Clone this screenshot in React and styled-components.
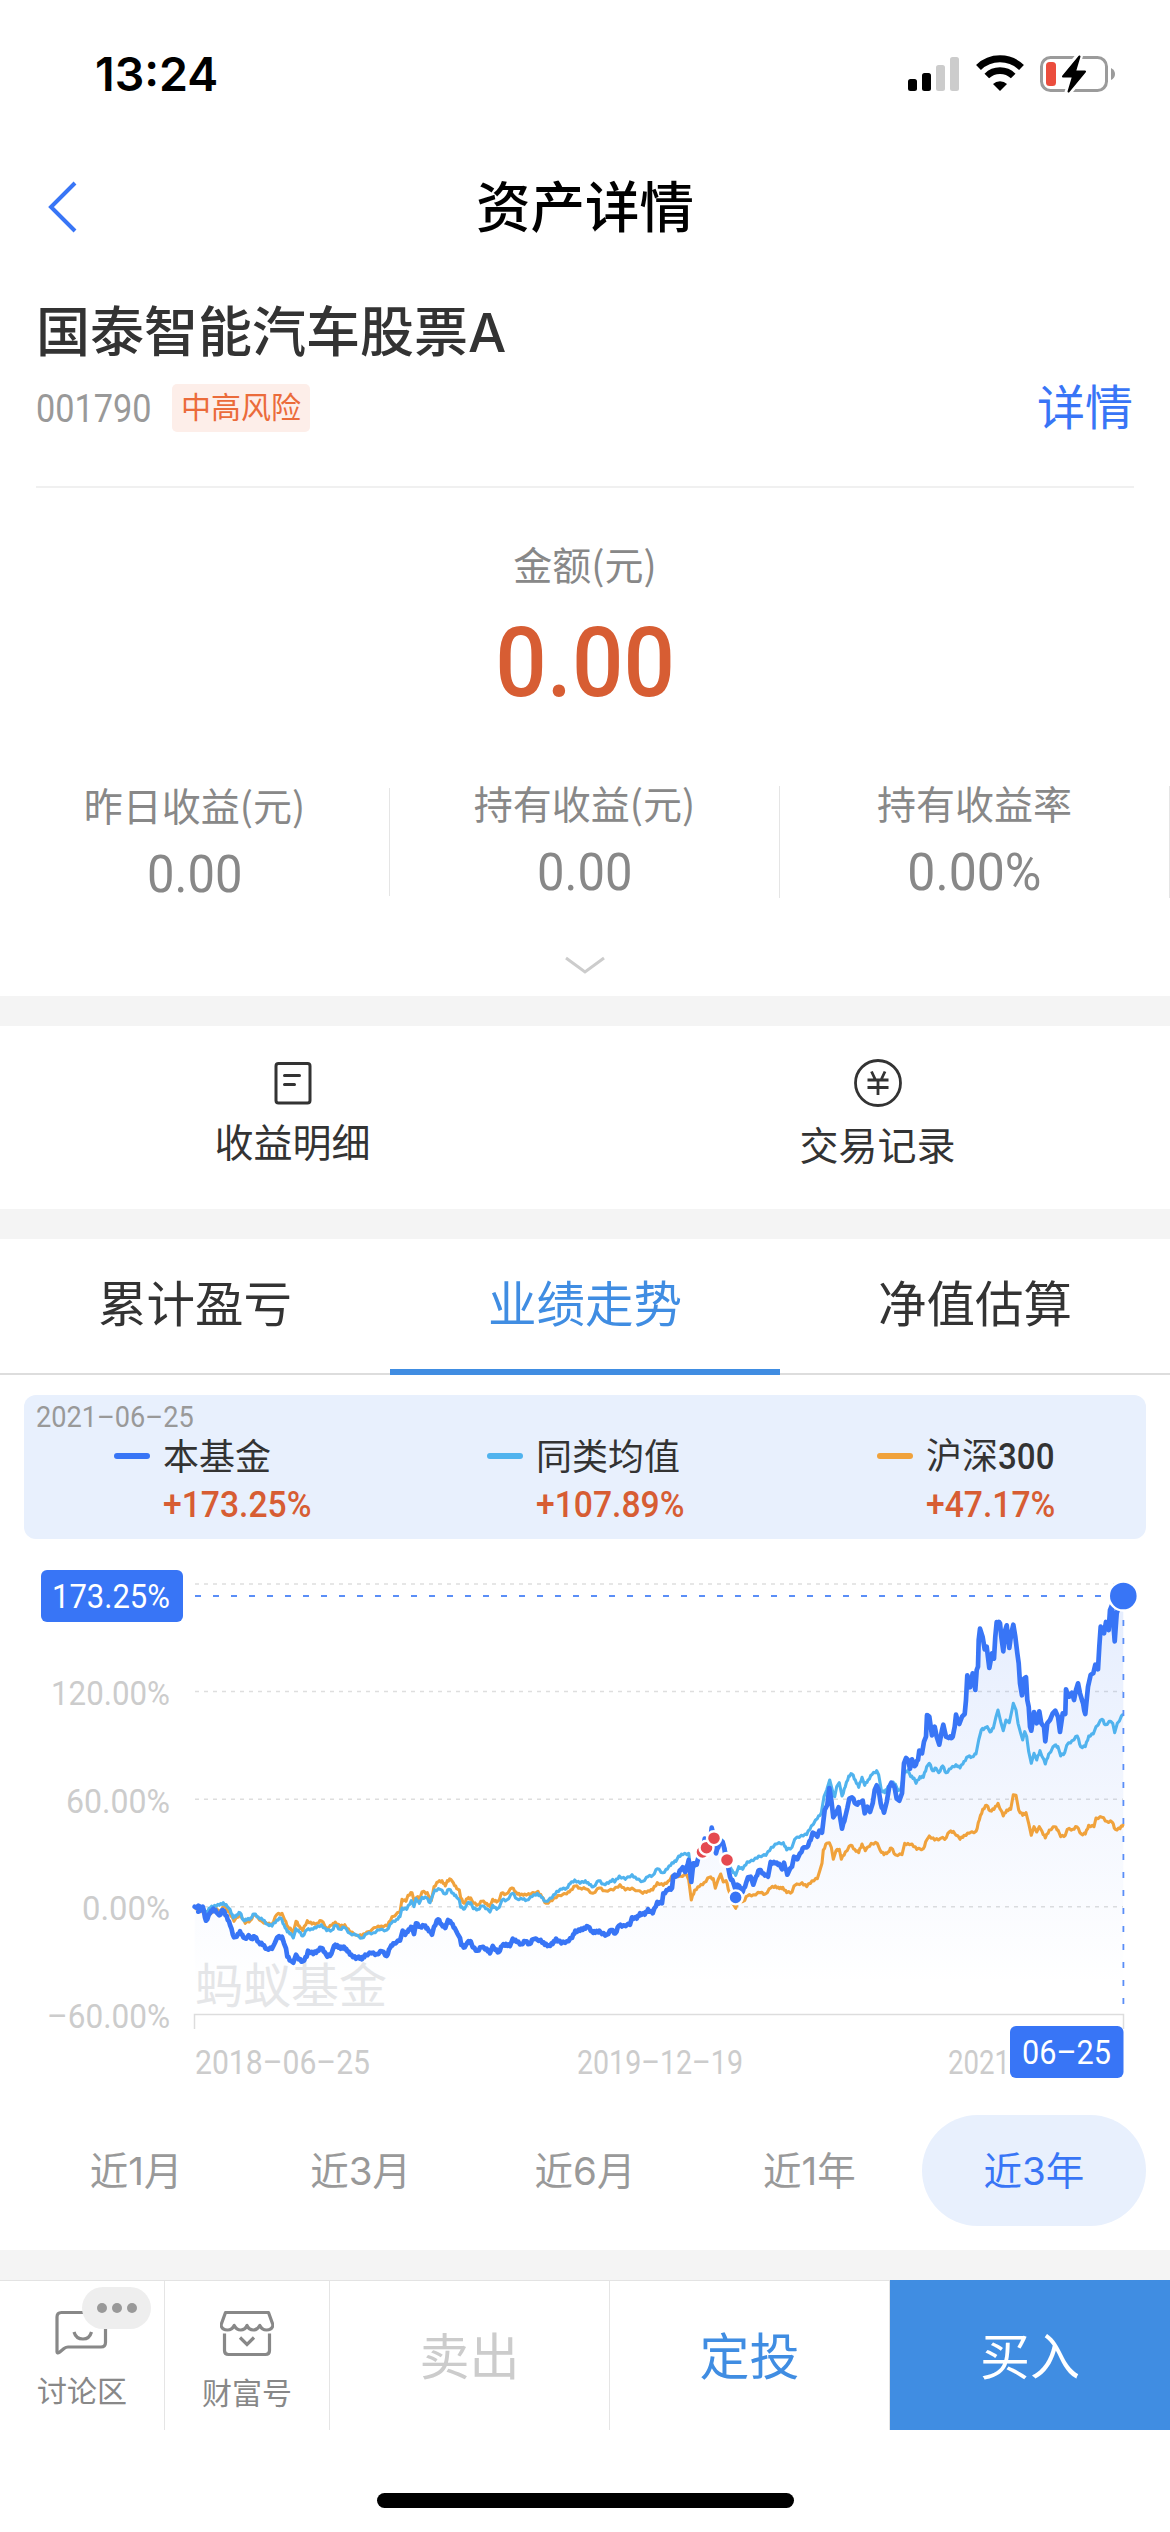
import styled, { createGlobalStyle } from "styled-components";

const CJK = `"Noto Sans CJK SC", sans-serif`;
const MIXED = `Inter, "Noto Sans CJK SC", sans-serif`;
const DIGITS = `Roboto, "Noto Sans CJK SC", sans-serif`;

const GlobalStyle = createGlobalStyle`
  * {
    box-sizing: border-box;
  }
  body {
    margin: 0;
    background: #fff;
    font-family: ${CJK};
  }
`;

const Page = styled.main`
  width: 1170px;
  height: 2532px;
  display: flex;
  flex-direction: column;
  background: #fff;
  color: #333;
  overflow: hidden;
  white-space: nowrap;
`;

/* narrow digits, $stretch squeezes the glyphs */
const Num = styled.span`
  display: inline-block;
  font-family: ${DIGITS};
  font-size: ${(props) => props.$size}px;
  font-weight: ${(props) => props.$weight || 450};
  line-height: 1;
  transform: scaleX(${(props) => props.$stretch || 0.9});
  transform-origin: ${(props) => props.$origin || "center"};
`;

/* ---------- status bar ---------- */

const StatusBarStyle = styled.div`
  height: 148px;
  padding: 0 54px 0 95px;
  display: flex;
  justify-content: space-between;
`;

const Clock = styled.span`
  font-family: Inter, sans-serif;
  font-weight: 600;
  font-size: 46.5px;
  line-height: 56px;
  padding-top: 46px;
  color: #000;
`;

const StatusIcons = styled.div`
  display: flex;
  gap: 16px;
  padding-top: 54px;
  height: 94px;
`;

const StatusBar = () => (
  <StatusBarStyle>
    <Clock>13:24</Clock>
    <StatusIcons>
      <svg width="52" height="40" viewBox="0 0 52 40">
        <rect x="0" y="25" width="9" height="12" rx="2.5" fill="#000" />
        <rect x="14" y="19" width="9" height="18" rx="2.5" fill="#000" />
        <rect x="28" y="11" width="9" height="26" rx="2.5" fill="#ccc" />
        <rect x="42" y="3" width="9" height="34" rx="2.5" fill="#ccc" />
      </svg>
      <svg width="48" height="40" viewBox="0 0 48 40">
        <path d="M2.5 13.5 A31 31 0 0 1 45.5 13.5" fill="none" stroke="#000" strokeWidth="7" />
        <path d="M10.8 22 A19 19 0 0 1 37.2 22" fill="none" stroke="#000" strokeWidth="6.6" />
        <path d="M24 37 L17 30 A10 10 0 0 1 31 30 Z" fill="#000" />
      </svg>
      <svg width="76" height="40" viewBox="0 0 76 40">
        <rect x="1.5" y="3.5" width="65" height="33" rx="9" fill="none" stroke="#9b9b9b" strokeWidth="3" />
        <path d="M71 14 Q75 16 75 20 Q75 24 71 26 Z" fill="#9b9b9b" />
        <rect x="6" y="8" width="10" height="24" rx="3.5" fill="#eb4d3d" />
        <path
          d="M39.5 1.5 L22 23 H32.5 L28 38.5 L46 17 H35.5 Z"
          fill="#000"
          stroke="#fff"
          strokeWidth="7"
          strokeLinejoin="round"
          paintOrder="stroke"
        />
        <path d="M39.5 2.5 L23 22.5 H33 L28.5 37.5 L45 17.5 H35 Z" fill="#000" stroke="#000" strokeWidth="2" strokeLinejoin="round" />
      </svg>
    </StatusIcons>
  </StatusBarStyle>
);

/* ---------- nav bar ---------- */

const NavBar = styled.header`
  height: 118px;
  display: grid;
  grid-template-columns: 120px 1fr 120px;
  align-items: center;
`;

const BackIcon = styled.svg`
  margin-left: 45px;
`;

const NavTitle = styled.h1`
  margin: 0;
  color: #000;
  font-size: 54.5px;
  line-height: 60px;
  font-weight: 500;
  text-align: center;
  padding-bottom: 6px;
`;

/* ---------- fund header ---------- */

const FundHeader = styled.section`
  margin: 33px 36px 0;
  height: 189px;
  border-bottom: 2px solid #f0f0f0;
`;

const FundName = styled.h2`
  margin: 0;
  font-family: ${MIXED};
  font-size: 54px;
  line-height: 68px;
  font-weight: 500;
`;

const FundMeta = styled.div`
  display: flex;
  align-items: center;
  height: 60px;
  margin-top: 11px;
  color: #999;
`;

const FundCode = styled.span`
  display: flex;
  width: 136px;
  padding-top: 3px;
`;

const RiskTag = styled.span`
  height: 48px;
  padding: 0 9px;
  border-radius: 5px;
  background: #fdeee9;
  color: #eb6b3a;
  font-size: 30px;
  line-height: 43px;
`;

const DetailLink = styled.a`
  margin-left: auto;
  margin-right: 1px;
  color: #3875f6;
  font-size: 48px;
  line-height: 56px;
  padding-bottom: 8px;
`;

/* ---------- amounts ---------- */

const Amount = styled.section`
  height: 298px;
  padding-top: 53px;
  display: flex;
  flex-direction: column;
  align-items: center;
  color: #888;
`;

const Label = styled.span`
  font-size: 39px;
  line-height: ${(props) => props.$line || 44}px;
  color: ${(props) => props.$color || "#888"};
`;

const BigNum = styled(Num)`
  margin-top: 30px;
  color: #d75d33;
`;

const Stats = styled.section`
  height: 210px;
  display: grid;
  grid-template-columns: repeat(3, 1fr);
  align-content: start;
`;

const Stat = styled.div`
  height: ${(props) => (props.$low ? 108 : 112)}px;
  margin-top: ${(props) => (props.$low ? 2 : 0)}px;
  border-right: 1px solid #e5e5e5;
  display: flex;
  flex-direction: column;
  align-items: center;
  gap: 29px;
  color: #888;
`;

const ChevronRow = styled.div`
  grid-column: 1 / -1;
  display: flex;
  justify-content: center;
  align-items: center;
  height: 30px;
  margin-top: 53px;
`;

const Gap = styled.div`
  height: 30px;
  flex: none;
  background: #f4f4f4;
`;

/* ---------- shortcuts ---------- */

const Shortcuts = styled.nav`
  height: 183px;
  display: grid;
  grid-template-columns: 1fr 1fr;
`;

const Shortcut = styled.a`
  display: flex;
  flex-direction: column;
  align-items: center;
  padding-top: 32px;
  gap: ${(props) => props.$gap}px;
`;

/* ---------- tabs ---------- */

const Tabs = styled.nav`
  height: 136px;
  display: grid;
  grid-template-columns: repeat(3, 1fr);
  box-shadow: inset 0 -2px 0 #ddd;
`;

const Tab = styled.a`
  font-size: 48.5px;
  line-height: 124px;
  text-align: center;
  color: ${(props) => (props.$active ? "#408de2" : "#333")};
  border-bottom: 6px solid ${(props) => (props.$active ? "#408de2" : "transparent")};
`;

/* ---------- legend ---------- */

const LegendCard = styled.section`
  margin: 20px 24px 0;
  height: 144px;
  padding: 7px 12px 0;
  border-radius: 12px;
  background: #e8f0fd;
`;

const LegendDate = styled.div`
  height: 31px;
  color: #999;
`;

const LegendRow = styled.div`
  display: grid;
  grid-template-columns: 373px 390px 1fr;
  padding-left: 78px;
`;

const LegendItem = styled.div`
  display: grid;
  grid-template-columns: 36px auto;
  column-gap: 13px;
  justify-content: start;
  align-items: center;
`;

const Dash = styled.i`
  height: 6px;
  border-radius: 3px;
  background: ${(props) => props.$color};
`;

const LegendName = styled.span`
  font-size: 36px;
  line-height: 40px;
  padding-bottom: 4px;
`;

const LegendValue = styled.span`
  grid-column: 2;
  height: 48px;
  padding-top: 8px;
  color: #d75d33;
`;

const legend = [
  { name: "本基金", value: "+173.25%", color: "#3875f6" },
  { name: "同类均值", value: "+107.89%", color: "#50b3ee" },
  { name: "沪深", digits: "300", value: "+47.17%", color: "#f0a23c" },
];

/* ---------- chart ---------- */

// x y pairs in thirds of a pixel, the second part starts 1440 units to the right
const fundA =
  "44,1040 60,1040 55,1055 68,1040 78,1082 90,1060 100,1046 110,1058 118,1066 128,1050 140,1068 150,1095 162,1132 170,1130 180,1114 190,1132 198,1136 206,1126 214,1136 224,1130 236,1146 248,1155 260,1166 276,1166 284,1150 292,1132 306,1130 312,1150 318,1165 322,1190 332,1202 340,1208 348,1184 356,1198 368,1204 380,1190 384,1172 400,1182 412,1172 424,1164 434,1176 442,1190 454,1182 462,1158 472,1156 482,1166 492,1160 502,1174 514,1184 528,1196 536,1190 546,1198 556,1184 574,1180 590,1182 606,1174 620,1188 630,1164 640,1150 660,1142 668,1112 676,1124 686,1108 696,1102 702,1122 708,1090 720,1100 732,1098 742,1104 756,1124 762,1100 774,1078 784,1092 796,1104 804,1080 814,1090 824,1104 832,1120 840,1134 844,1155 854,1162 862,1148 872,1144 878,1162 892,1172 904,1162 920,1166 930,1180 938,1158 946,1170 956,1176 966,1158 978,1152 990,1158 998,1136 1010,1146 1024,1152 1036,1144 1048,1152 1060,1138 1082,1140 1094,1154 1106,1156 1118,1152 1128,1136 1144,1150 1160,1144 1176,1134 1186,1112 1200,1112 1212,1104 1224,1100 1236,1114 1246,1118 1258,1112 1266,1122 1280,1124 1294,1110 1306,1120 1316,1098 1330,1096 1350,1094 1356,1072 1370,1076 1380,1060 1394,1064 1404,1048 1418,1060 1432,1026 1446,1030 1450,1000 1464,990 1476,984";
const fundB =
  "40,948 52,946 62,930 68,922 76,936 86,900 94,966 100,910 110,914 118,880 130,868 134,836 142,865 150,850 155,803 162,834 168,880 178,850 188,846 200,900 206,930 210,950 220,968 227,990 232,974 238,978 248,996 258,970 264,952 272,950 280,974 288,950 298,930 310,940 324,950 332,906 346,910 358,912 366,928 372,908 382,944 390,926 396,920 402,890 412,898 420,880 432,862 440,862 452,840 458,818 466,822 472,830 478,812 486,818 494,750 502,735 508,684 514,720 520,772 528,760 536,742 540,770 546,806 556,770 562,745 568,716 576,712 588,732 600,728 608,722 614,760 622,740 630,756 638,730 644,690 650,676 656,690 662,730 672,758 680,726 688,680 694,668 704,684 710,716 718,722 726,700 732,610 738,594 744,600 750,626 756,598 764,618 774,600 778,572 786,580 792,545 798,530 801,465 808,470 816,526 824,500 830,530 838,554 846,510 850,494 858,530 866,534 878,530 884,500 888,464 898,492 906,470 914,462 918,420 922,346 930,382 938,340 946,390 950,330 954,320 956,240 960,206 968,232 974,268 980,260 988,324 996,280 1002,296 1006,230 1010,186 1020,190 1024,230 1030,274 1036,210 1040,196 1048,264 1054,220 1060,194 1066,230 1072,280 1076,310 1080,370 1086,406 1092,356 1098,352 1102,420 1106,440 1110,500 1114,512 1122,456 1130,490 1138,454 1144,490 1152,500 1156,544 1162,490 1170,480 1178,460 1186,452 1194,470 1200,516 1208,460 1216,462 1218,388 1228,410 1236,398 1242,420 1248,390 1254,370 1260,400 1266,420 1276,462 1284,380 1292,344 1300,340 1306,314 1314,328 1318,260 1322,200 1332,220 1338,186 1346,210 1350,150 1356,135 1364,244 1370,160 1380,120 1390,108";
const peersA =
  "44,1040 64,1040 80,1056 90,1044 104,1036 118,1036 130,1028 142,1040 150,1048 160,1074 170,1064 180,1058 190,1080 200,1080 212,1074 222,1062 234,1070 248,1080 262,1092 276,1098 290,1080 302,1074 312,1094 322,1116 332,1120 340,1134 348,1106 358,1116 368,1128 380,1110 394,1106 408,1104 424,1094 440,1112 456,1110 466,1096 480,1108 492,1102 510,1120 528,1126 546,1134 560,1122 580,1118 598,1110 620,1110 634,1090 650,1078 660,1070 666,1044 680,1048 694,1022 702,1040 708,1016 718,1030 726,1012 740,1014 750,1028 758,1006 764,990 780,988 796,1002 806,988 820,1000 830,1012 838,1020 842,1042 854,1046 862,1030 872,1028 880,1046 894,1048 906,1038 922,1046 930,1056 938,1036 950,1048 958,1042 966,1020 980,1020 998,1000 1010,1016 1028,1018 1040,1020 1056,1010 1072,1000 1084,1012 1096,1024 1116,1014 1130,994 1146,988 1160,984 1170,972 1184,960 1200,970 1216,962 1228,974 1240,980 1256,962 1270,972 1286,970 1298,958 1304,966 1318,948 1336,958 1356,944 1370,958 1388,964 1404,950 1418,946 1432,926 1448,938 1462,928 1476,908 1488,904";
const peersB =
  "56,888 68,884 86,880 92,930 100,925 112,900 130,880 150,850 170,870 186,840 196,866 206,910 216,930 227,946 236,920 248,928 262,905 280,902 296,888 318,886 334,862 350,852 370,848 380,870 396,862 404,838 424,826 440,824 454,798 472,776 484,758 492,710 500,690 509,660 518,695 524,710 530,680 538,668 546,708 556,680 566,648 576,642 586,660 596,682 606,652 614,676 624,660 636,644 650,632 656,645 664,690 674,698 684,680 696,668 706,672 714,692 722,688 732,640 744,630 752,650 762,654 768,670 780,650 790,652 800,620 808,610 818,632 828,625 836,638 848,618 858,638 872,626 888,614 900,624 912,604 924,590 936,590 948,582 956,540 964,510 974,504 982,500 990,516 1000,505 1008,470 1014,450 1022,485 1030,512 1038,480 1048,488 1056,450 1060,430 1068,450 1074,490 1082,520 1088,540 1094,515 1100,530 1106,575 1114,610 1122,580 1130,600 1140,572 1156,612 1166,582 1184,556 1194,560 1202,588 1214,578 1220,556 1236,542 1252,528 1262,560 1276,560 1286,528 1300,522 1308,500 1326,478 1336,494 1352,484 1358,490 1364,518 1372,490 1390,462";
const indexA =
  "44,1040 56,1052 66,1050 78,1070 90,1062 104,1046 120,1052 132,1040 148,1056 162,1084 180,1062 196,1090 212,1080 222,1064 246,1084 262,1092 276,1092 290,1064 306,1060 314,1080 324,1100 334,1110 340,1118 348,1084 358,1098 368,1112 382,1082 396,1092 410,1090 424,1082 440,1104 456,1096 466,1086 480,1100 494,1094 510,1116 528,1124 546,1128 560,1116 590,1102 604,1098 622,1098 636,1070 660,1056 666,1018 678,1024 684,1006 696,998 702,1022 710,1012 720,1014 726,996 742,998 754,1022 762,980 774,966 786,962 796,978 802,962 812,958 820,968 830,986 838,990 842,1014 852,1030 862,1016 872,1014 880,1030 894,1034 906,1024 920,1030 930,1040 938,1018 950,1026 958,1020 964,1000 978,1002 996,984 1008,996 1020,1006 1034,1002 1050,1004 1074,994 1086,1012 1098,1030 1116,1022 1134,1006 1160,1002 1172,990 1186,978 1200,984 1216,986 1238,1000 1258,984 1274,992 1300,990 1320,974 1336,990 1356,984 1388,1000 1404,992 1418,990 1432,968";
const indexB =
  "10,976 24,964 40,946 60,948 80,945 86,960 94,1020 104,990 118,980 132,968 148,952 160,956 166,985 174,960 182,942 190,966 198,962 208,996 218,1030 227,1045 236,1020 250,1024 262,1008 280,1004 300,998 316,1002 332,984 346,978 358,986 368,982 380,998 396,996 402,978 426,968 440,980 456,962 472,956 480,930 486,910 490,870 500,850 508,848 514,862 520,898 528,872 538,868 544,898 556,876 572,856 584,868 596,878 606,852 616,872 634,850 652,850 660,870 672,884 684,876 694,864 706,884 726,884 734,850 748,854 756,852 770,868 790,866 800,840 808,828 824,840 840,836 848,832 854,838 868,816 880,814 900,838 912,826 928,820 948,814 958,780 968,748 980,736 990,752 1002,748 1014,730 1030,768 1040,750 1052,748 1060,704 1068,706 1076,750 1088,766 1098,758 1106,790 1114,826 1122,800 1130,816 1138,800 1146,814 1156,834 1168,810 1184,800 1194,810 1202,830 1216,826 1222,808 1238,808 1250,800 1264,822 1276,822 1286,796 1302,800 1308,774 1326,772 1340,784 1356,786 1366,808 1380,806 1390,792";

const parse = (text, shift) =>
  text.split(" ").map((pair) => {
    const [x, y] = pair.split(",").map(Number);
    return [180 + (x + shift) / 3, y / 3];
  });

const roughen = (points, amp) => {
  const out = [points[0]];
  for (let i = 1; i < points.length; i++) {
    const [x0, y0] = points[i - 1];
    const [x1, y1] = points[i];
    if (x1 - x0 > 3) {
      const side = i % 2 ? 1 : -1;
      out.push([x0 + (x1 - x0) * 0.35, y0 + (y1 - y0) * 0.35 + amp * side]);
      out.push([x0 + (x1 - x0) * 0.7, y0 + (y1 - y0) * 0.7 - amp * side]);
    }
    out.push([x1, y1]);
  }
  return out;
};

const line = (a, b, amp) =>
  roughen([...parse(a, 0), ...parse(b, 1440)], amp)
    .map(([x, y]) => `${x.toFixed(1)},${y.toFixed(1)}`)
    .join(" ");

const fundLine = line(fundA, fundB, 1);
const peersLine = line(peersA, peersB, 0.9);
const indexLine = line(indexA, indexB, 0.9);

const yLabels = [
  { text: "120.00%", y: 145, x: 51, width: 119 },
  { text: "60.00%", y: 253, x: 66, width: 104 },
  { text: "0.00%", y: 360, x: 82, width: 88 },
  { text: "–60.00%", y: 468, x: 47, width: 123 },
];

// the last date is cut to its year, the selected day covers the rest
const xLabels = [
  { text: "2018–06–25", x: 195, width: 175 },
  { text: "2019–12–19", x: 577, width: 166 },
  { text: "2021", x: 948, width: 62 },
];

const trades = [
  { x: 702.5, y: 292, color: "#e54a50" },
  { x: 706.5, y: 287.7, color: "#e54a50" },
  { x: 714, y: 278.2, color: "#e54a50" },
  { x: 727, y: 300, color: "#e54a50" },
  { x: 735.6, y: 337.4, color: "#3875f6" },
];

const ChartStyle = styled.svg`
  display: block;
  flex: none;
  margin-top: 21px;
`;

const AxisText = styled.text`
  font-family: ${DIGITS};
  font-size: 33px;
  font-weight: 450;
  fill: ${(props) => props.$fill || "#ccc"};
`;

const Watermark = styled.text`
  font-family: ${CJK};
  font-size: 48px;
  fill: #e5e6e8;
`;

const Chart = () => (
  <ChartStyle width="1170" height="540" viewBox="0 0 1170 540">
    <defs>
      <linearGradient id="area" gradientUnits="userSpaceOnUse" x1="0" y1="36" x2="0" y2="425">
        <stop offset="0" stopColor="#3875f6" stopOpacity="0.13" />
        <stop offset="1" stopColor="#3875f6" stopOpacity="0" />
      </linearGradient>
    </defs>

    {[24, 131.5, 239.3, 346.8].map((y) => (
      <line key={y} x1="195" x2="1123" y1={y} y2={y} stroke="#dedede" strokeWidth="1.5" strokeDasharray="4 5" />
    ))}
    <polyline points="194.5,469 194.5,454.5 1123.5,454.5 1123.5,469" fill="none" stroke="#ddd" strokeWidth="1.5" />
    <Watermark x="195" y="443">
      蚂蚁基金
    </Watermark>

    <polygon points={`${fundLine} 1123.3,454 194.7,454`} fill="url(#area)" />
    <polyline points={indexLine} fill="none" stroke="#f0a23c" strokeWidth="3.1" strokeLinejoin="round" />
    <polyline points={peersLine} fill="none" stroke="#50b3ee" strokeWidth="3.1" strokeLinejoin="round" />
    <polyline points={fundLine} fill="none" stroke="#3875f6" strokeWidth="4.7" strokeLinejoin="round" strokeLinecap="round" />

    <line x1="195" x2="1110" y1="36" y2="36" stroke="#5a8ef7" strokeWidth="1.8" strokeDasharray="6 12" />
    <line x1="1123.4" x2="1123.4" y1="60" y2="454" stroke="#5a8ef7" strokeWidth="1.8" strokeDasharray="6 12" />

    {trades.map((dot) => (
      <circle key={dot.x} cx={dot.x} cy={dot.y} r="7" fill={dot.color} stroke="#fff" strokeWidth="2.4" />
    ))}
    <circle cx="1123.3" cy="36" r="14.5" fill="#3875f6" stroke="#fff" strokeWidth="2.4" />

    <rect x="41" y="10" width="142" height="52" rx="6" fill="#3875f6" />
    <AxisText x="52" y="48" textLength="118" lengthAdjust="spacingAndGlyphs" $fill="#fff">
      173.25%
    </AxisText>
    {yLabels.map((label) => (
      <AxisText key={label.text} x={label.x} y={label.y} textLength={label.width} lengthAdjust="spacingAndGlyphs">
        {label.text}
      </AxisText>
    ))}
    {xLabels.map((label) => (
      <AxisText key={label.x} x={label.x} y="514" textLength={label.width} lengthAdjust="spacingAndGlyphs">
        {label.text}
      </AxisText>
    ))}
    <rect x="1010" y="466" width="113.5" height="52" rx="6" fill="#3875f6" />
    <AxisText x="1022" y="504" textLength="89" lengthAdjust="spacingAndGlyphs" $fill="#fff">
      06–25
    </AxisText>
  </ChartStyle>
);

/* ---------- ranges ---------- */

const Ranges = styled.nav`
  margin: 15px 24px 24px;
  height: 111px;
  flex: none;
  display: grid;
  grid-template-columns: repeat(5, 1fr);
`;

const Range = styled.a`
  border-radius: 56px;
  font-family: ${MIXED};
  font-size: 38.5px;
  line-height: 109px;
  padding-top: 2px;
  text-align: center;
  color: ${(props) => (props.$active ? "#3875f6" : "#999")};
  background: ${(props) => (props.$active ? "#e8f0fd" : "transparent")};
`;

/* ---------- bottom bar ---------- */

const BottomBar = styled.footer`
  height: 150px;
  flex: none;
  display: grid;
  grid-template-columns: 165px 165px 280px 280px 280px;
  border-top: 1px solid #e3e3e3;
`;

const Entry = styled.a`
  position: relative;
  display: flex;
  flex-direction: column;
  align-items: center;
  padding-top: 28px;
  border-right: 1px solid #e5e5e5;
  color: #888;
  font-size: 30px;
  line-height: 36px;
  gap: ${(props) => props.$gap}px;
`;

const MoreBadge = styled.span`
  position: absolute;
  top: 6px;
  left: 82px;
  width: 69px;
  height: 42px;
  border-radius: 21px;
  background: #eee;
  display: flex;
  justify-content: center;
  align-items: center;
  gap: 5px;
`;

const MoreDot = styled.i`
  width: 10px;
  height: 10px;
  border-radius: 50%;
  background: #999;
`;

const Action = styled.button`
  margin: 0;
  padding: 0 0 5px;
  border: 0;
  border-right: ${(props) => (props.$primary ? "0" : "1px solid #e5e5e5")};
  margin-top: ${(props) => (props.$primary ? "-1px" : "0")};
  font-family: ${CJK};
  font-size: 50px;
  background: ${(props) => (props.$primary ? "#408de2" : "#fff")};
  color: ${(props) => props.$color};
`;

const HomeArea = styled.div`
  flex: 1;
  display: flex;
  justify-content: center;
  padding-top: 63px;
`;

const HomeIndicator = styled.div`
  width: 417px;
  height: 15px;
  border-radius: 8px;
  background: #000;
`;

const App = () => (
  <Page>
    <GlobalStyle />
    <StatusBar />

    <NavBar>
      <BackIcon width="34" height="56" viewBox="0 0 34 56" fill="none">
        <path d="M30 4 L6 28 L30 52" stroke="#3875f6" strokeWidth="4" />
      </BackIcon>
      <NavTitle>资产详情</NavTitle>
    </NavBar>

    <FundHeader>
      <FundName>国泰智能汽车股票A</FundName>
      <FundMeta>
        <FundCode>
          <Num $size={38.5} $stretch={0.89} $origin="left">
            001790
          </Num>
        </FundCode>
        <RiskTag>中高风险</RiskTag>
        <DetailLink>详情</DetailLink>
      </FundMeta>
    </FundHeader>

    <Amount>
      <Label>金额(元)</Label>
      <BigNum $size={97} $weight={500} $stretch={0.935}>
        0.00
      </BigNum>
    </Amount>

    <Stats>
      <Stat $low>
        <Label $line={32}>昨日收益(元)</Label>
        <Num $size={51} $stretch={0.96}>
          0.00
        </Num>
      </Stat>
      <Stat>
        <Label $line={32}>持有收益(元)</Label>
        <Num $size={51} $stretch={0.96}>
          0.00
        </Num>
      </Stat>
      <Stat>
        <Label $line={32}>持有收益率</Label>
        <Num $size={51} $stretch={0.98}>
          0.00%
        </Num>
      </Stat>
      <ChevronRow>
        <svg width="42" height="20" viewBox="0 0 42 20" fill="none">
          <path d="M2 2 L21 16 L40 2" stroke="#ccc" strokeWidth="3" />
        </svg>
      </ChevronRow>
    </Stats>
    <Gap />

    <Shortcuts>
      <Shortcut $gap={10}>
        <svg width="40" height="50" viewBox="0 0 40 50" fill="none" stroke="#333" strokeWidth="3">
          <rect x="3" y="5.5" width="34" height="39.5" rx="2.5" />
          <path d="M11.5 17.5 H26.5 M11.5 26.5 H21.5" strokeLinecap="round" />
        </svg>
        <Label $color="#333">收益明细</Label>
      </Shortcut>
      <Shortcut $gap={13}>
        <svg width="50" height="50" viewBox="0 0 50 50" fill="none" stroke="#333" strokeWidth="2.8">
          <circle cx="25" cy="25" r="22.5" />
          <path d="M18.5 13.5 L22 21 M32 13.5 L28.5 21 M14.5 22 H35.5 M14.5 29.5 H35.5 M25 22 V37" />
        </svg>
        <Label $color="#333">交易记录</Label>
      </Shortcut>
    </Shortcuts>
    <Gap />

    <Tabs>
      <Tab>累计盈亏</Tab>
      <Tab $active>业绩走势</Tab>
      <Tab>净值估算</Tab>
    </Tabs>

    <LegendCard>
      <LegendDate>
        <Num $size={30} $stretch={0.905} $origin="left">
          2021–06–25
        </Num>
      </LegendDate>
      <LegendRow>
        {legend.map((item) => (
          <LegendItem key={item.name}>
            <Dash $color={item.color} />
            <LegendName>
              {item.name}
              {item.digits && (
                <Num $size={36} $weight={500} $stretch={0.92} $origin="left">
                  {item.digits}
                </Num>
              )}
            </LegendName>
            <LegendValue>
              <Num $size={36} $weight={500} $stretch={0.935} $origin="left">
                {item.value}
              </Num>
            </LegendValue>
          </LegendItem>
        ))}
      </LegendRow>
    </LegendCard>

    <Chart />

    <Ranges>
      <Range>近1月</Range>
      <Range>近3月</Range>
      <Range>近6月</Range>
      <Range>近1年</Range>
      <Range $active>近3年</Range>
    </Ranges>
    <Gap />

    <BottomBar>
      <Entry $gap={12}>
        <svg width="54" height="50" viewBox="0 0 54 50" fill="none" stroke="#888" strokeWidth="3.2">
          <path d="M2 43 V8 Q2 3.5 6.5 3.5 H46 Q50.500 3.500 50.500 8 V33.500 Q50.500 38 46 38 H13 Q11 38 9 39.500 L4.500 43.300 Q2 45 2 42.500 Z" strokeLinejoin="round" />
          <path d="M19 23 Q21 30 28 30 Q34.500 30 36.500 23" />
        </svg>
        讨论区
        <MoreBadge>
          <MoreDot />
          <MoreDot />
          <MoreDot />
        </MoreBadge>
      </Entry>
      <Entry $gap={14}>
        <svg width="54" height="50" viewBox="0 0 54 50" fill="none" stroke="#888" strokeWidth="3.2">
          <path d="M5.500 3.500 H48.500 L53 16 Q52 21 46.500 21 Q42 21 39.800 16.500 Q37.500 21 33.300 21 Q29 21 27 16.500 Q25 21 20.800 21 Q16.500 21 14.200 16.500 Q12 21 7.500 21 Q2 21 1 16 Z" strokeLinejoin="round" />
          <path d="M4.500 24.500 V41.500 Q4.500 45.500 8.500 45.500 H45.500 Q49.500 45.500 49.500 41.500 V24.500" />
          <path d="M20 28.500 L27 35.500 L34 28.500" />
        </svg>
        财富号
      </Entry>
      <Action $color="#ccc">卖出</Action>
      <Action $color="#408de2">定投</Action>
      <Action $primary $color="#fff">
        买入
      </Action>
    </BottomBar>

    <HomeArea>
      <HomeIndicator />
    </HomeArea>
  </Page>
);

export default App;
